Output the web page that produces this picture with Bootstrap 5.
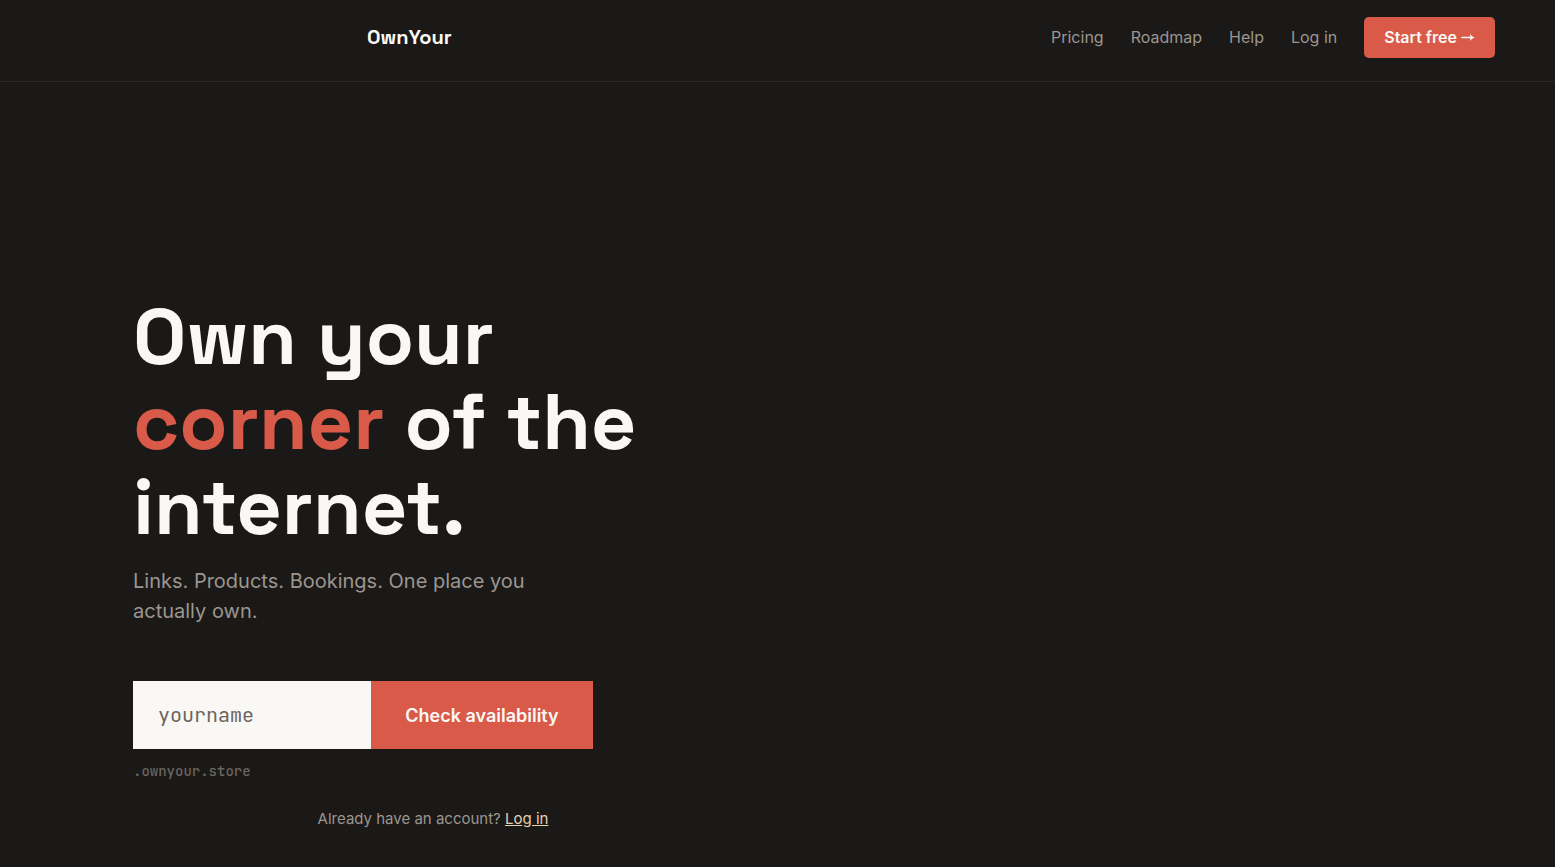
<!DOCTYPE html>
<html lang="en" data-bs-theme="dark">
<head>
<meta charset="utf-8">
<meta name="viewport" content="width=device-width, initial-scale=1">
<title>OwnYour</title>
<link href="https://cdn.jsdelivr.net/npm/bootstrap@5.3.0/dist/css/bootstrap.min.css" rel="stylesheet">
<style>
:root{--ink:#1a1917;--coral:#d95a49;--paper:#faf8f4;--dim:#9c9590;--faint:#6b6560}
body{background:var(--ink);color:var(--paper);font-family:Inter,"Liberation Sans",sans-serif}
.site-header{border-bottom:1px solid #292826;padding:17px 60px 23px 0}
.brand-slot{padding-left:367px}
.navbar-brand,.hero-title{font-family:"Space Grotesk",Inter,sans-serif;font-weight:700;color:var(--paper)}
.navbar-brand{display:block;font-size:20px;line-height:40px}
.site-nav{gap:27px}
.site-nav .nav-link{color:var(--dim);font-size:16px;line-height:40px}
.btn-coral{--bs-btn-bg:var(--coral);--bs-btn-color:var(--paper);--bs-btn-hover-bg:#c64d3d;--bs-btn-hover-color:#fff;--bs-btn-border-width:0;font-weight:600}
.btn-start{font-size:16px;line-height:25px;padding:8px 20px;border-radius:5px}
.hero{padding:212px 133px 32px}
.hero-copy{max-width:600px}
.hero-title{font-size:79px;line-height:85px;margin-bottom:17px}
.hero-title em{font-style:normal;color:var(--coral)}
.lede{font-size:20px;line-height:30px;color:var(--dim);max-width:420px;margin-bottom:55px}
.claim{max-width:460px}
.claim .form-control{background:var(--paper);color:#1a1917;border:0;border-radius:0;font-family:"JetBrains Mono","DejaVu Sans Mono",monospace;font-size:20px;height:68px;padding:0 25px}
.claim .form-control::placeholder{color:var(--faint)}
.btn-claim{font-size:18px;width:222px;border-radius:0}
.suffix{font-family:"JetBrains Mono","DejaVu Sans Mono",monospace;font-size:14px;font-weight:500;line-height:20px;color:var(--faint);margin:12px 0 26px}
.account{font-size:15px;line-height:24px;color:var(--dim)}
.account a{color:#e8d0b0}
</style>
</head>
<body>
<header class="site-header d-flex justify-content-between align-items-start">
<div class="brand-slot"><a class="navbar-brand p-0 m-0" href="#">OwnYour</a></div>
<nav class="site-nav d-flex align-items-start" aria-label="Main">
<a class="nav-link p-0" href="#">Pricing</a><a class="nav-link p-0" href="#">Roadmap</a><a class="nav-link p-0" href="#">Help</a><a class="nav-link p-0" href="#">Log in</a>
<button class="btn btn-coral btn-start d-flex align-items-center gap-1" type="button">Start free <svg width="14" height="9" viewBox="0 0 14 9" aria-hidden="true"><path d="M1 4.5h9" stroke="currentColor" stroke-width="1.6" stroke-linecap="round"/><path d="M9 1q1.400 2.500 4.600 3.500Q10.400 5.500 9 8q.6-3.500 0-7Z" fill="currentColor"/></svg></button>
</nav>
</header>
<main class="hero">
<div class="hero-copy">
<h1 class="hero-title">Own your<br><em>corner</em> of the<br>internet.</h1>
<p class="lede">Links. Products. Bookings. One place you actually own.</p>
<form>
<div class="claim d-flex"><input class="form-control" id="site" type="text" placeholder="yourname"><button class="btn btn-coral btn-claim flex-shrink-0" type="submit">Check availability</button></div>
<label class="suffix d-block" for="site">.ownyour.store</label>
</form>
<p class="account text-center mb-0">Already have an account? <a href="#">Log in</a></p>
</div>
</main>
<script src="https://cdn.jsdelivr.net/npm/bootstrap@5.3.0/dist/js/bootstrap.bundle.min.js"></script>
</body>
</html>
